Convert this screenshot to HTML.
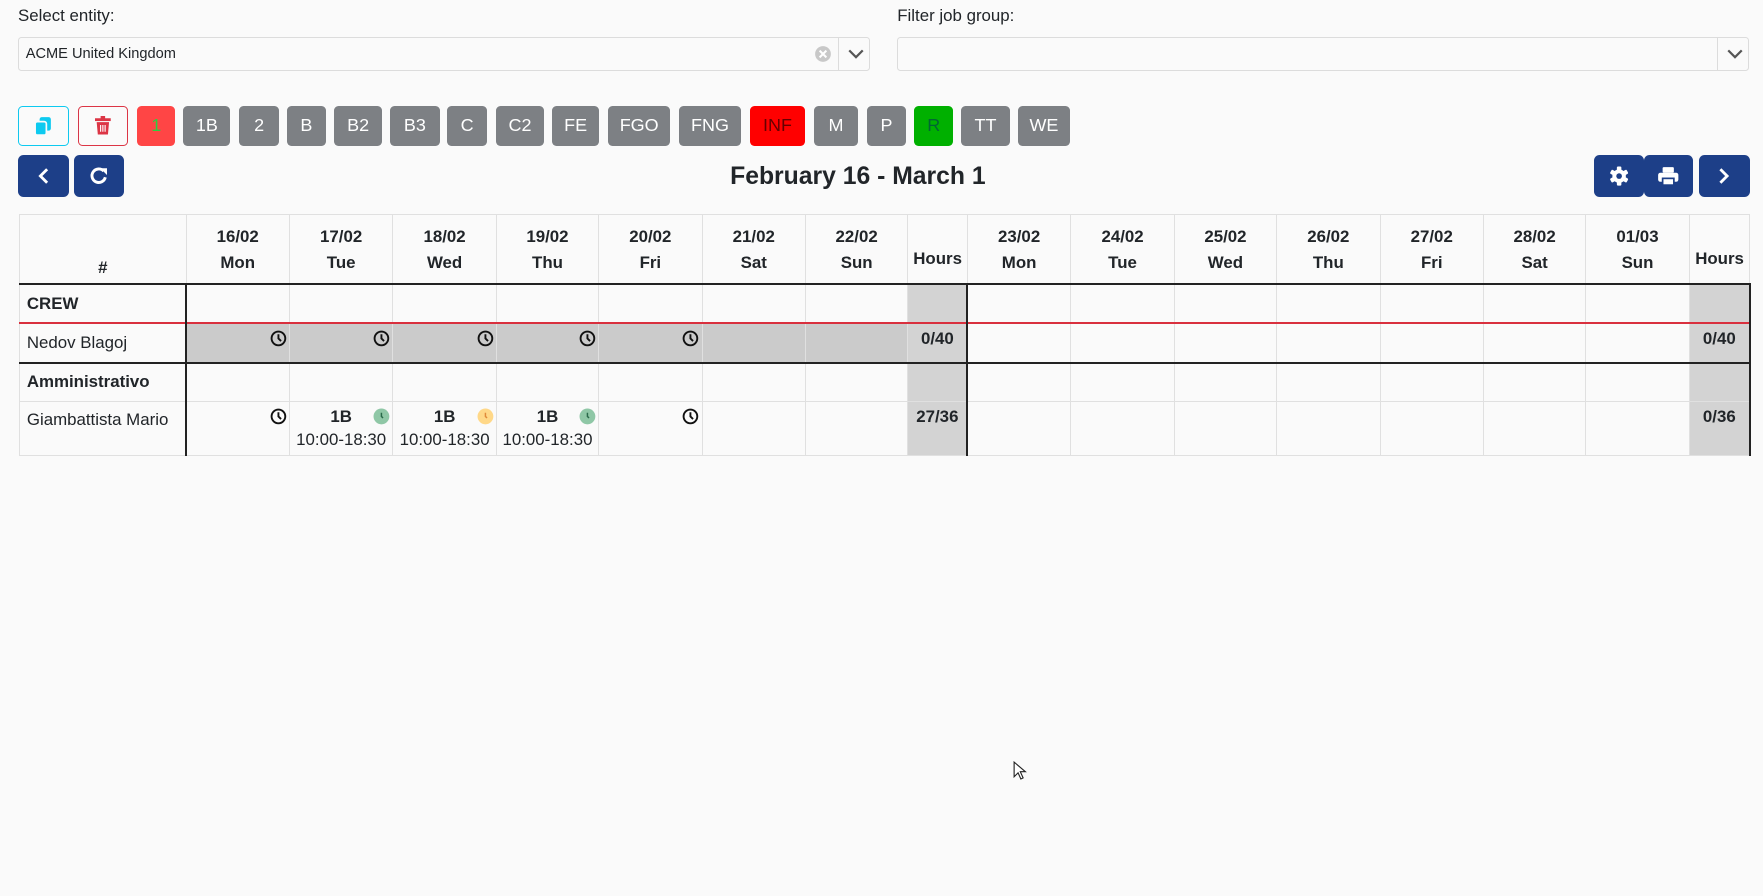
<!DOCTYPE html>
<html><head><meta charset="utf-8"><style>
html{zoom:1.12436}
body{margin:0;background:#fafafa;font-family:"Liberation Sans",sans-serif;color:#212529;width:1568px;height:797px;position:relative;overflow:hidden}
.abs{position:absolute}
.lbl{font-size:15px;top:5px}
.sel{height:28px;border:1px solid #dcdcdc;border-radius:3px;background:#fafafa;top:33px}
.btn{position:absolute;top:94px;height:36px;border-radius:4px;background:#7d8084;color:#fff;font-size:16px;display:flex;align-items:center;justify-content:center;box-sizing:border-box}
.nb{position:absolute;top:138px;height:37px;border-radius:5px;background:#1d3f88;display:flex;align-items:center;justify-content:center}
table{position:absolute;left:17px;top:190px;border-collapse:collapse;table-layout:fixed;width:1539px;font-size:15px}
td,th{border:1px solid #e0e0e0;padding:0;position:relative;box-sizing:border-box}
th{height:62px;font-weight:bold;font-size:15px;line-height:23px;text-align:center;vertical-align:middle;padding-top:2px}
th.h{vertical-align:bottom;padding-bottom:2px}
.bt td{border-top:2px solid #222}
td.n{border-right:2px solid #222;padding-left:6px;text-align:left}
tr.r1 td{height:35px}
tr.r3 td{height:48px;vertical-align:top}
.g{background:#cbcbcb}.hr{background:#d3d3d3;font-weight:bold;text-align:center;vertical-align:top;padding-top:4px}
.ck{position:absolute;right:2px;top:5px;width:15px;height:15px}
.sh{font-weight:bold;text-align:center;margin-top:4px;line-height:17px}
.tm{text-align:center;font-size:15px;margin-top:4px;line-height:18px}
</style></head><body>
<div class="abs lbl" style="left:16px">Select entity:</div>
<div class="abs lbl" style="left:798px">Filter job group:</div>
<div class="abs sel" style="left:16px;width:756px"><span style="position:absolute;left:6px;top:7px;font-size:13px">ACME United Kingdom</span>
<svg class="abs" style="left:707px;top:6px" width="16" height="16"><circle cx="8" cy="8" r="7" fill="#c8c8c8"/><path d="M5 5L11 11M11 5L5 11" stroke="#fff" stroke-width="1.8"/></svg>
<div class="abs" style="left:728px;top:0;width:1px;height:28px;background:#dcdcdc"></div>
<svg class="abs" style="left:736px;top:8px" width="16" height="12"><path d="M2 3L8 9L14 3" stroke="#555" stroke-width="2" fill="none"/></svg></div>
<div class="abs sel" style="left:798px;width:756px"><div class="abs" style="left:728px;top:0;width:1px;height:28px;background:#dcdcdc"></div>
<svg class="abs" style="left:736px;top:8px" width="16" height="12"><path d="M2 3L8 9L14 3" stroke="#555" stroke-width="2" fill="none"/></svg></div>

<div class="btn" style="left:16px;width:45px;background:#fafafa;border:1px solid #0dcaf0"><svg width="16" height="18"><rect x="5" y="1" width="10" height="12" rx="2" fill="#0dcaf0"/><rect x="1" y="5" width="10" height="12" rx="2" fill="#0dcaf0" stroke="#fafafa" stroke-width="1.5"/></svg></div>
<div class="btn" style="left:69px;width:45px;background:#fafafa;border:1px solid #dc3545"><svg width="14" height="17"><rect x="0" y="2" width="14" height="2.5" fill="#dc3545"/><rect x="5" y="0" width="4" height="3" fill="#dc3545"/><path d="M1.5 5.5h11l-1 11h-9z" fill="#dc3545"/><path d="M5 8v6M7 8v6M9 8v6" stroke="#fff" stroke-width="1"/></svg></div>
<div class="btn" style="left:122px;width:34px;background:#ff4545;color:#2ecc40">1</div>
<div class="btn" style="left:163px;width:42px">1B</div>
<div class="btn" style="left:213px;width:35px">2</div>
<div class="btn" style="left:255px;width:35px">B</div>
<div class="btn" style="left:297px;width:43px">B2</div>
<div class="btn" style="left:347px;width:44px">B3</div>
<div class="btn" style="left:398px;width:35px">C</div>
<div class="btn" style="left:441px;width:43px">C2</div>
<div class="btn" style="left:491px;width:42px">FE</div>
<div class="btn" style="left:541px;width:55px">FGO</div>
<div class="btn" style="left:604px;width:55px">FNG</div>
<div class="btn" style="left:667px;width:49px;background:#ff0000;color:#600">INF</div>
<div class="btn" style="left:724px;width:39px">M</div>
<div class="btn" style="left:771px;width:35px">P</div>
<div class="btn" style="left:813px;width:35px;background:#00b000;color:#063">R</div>
<div class="btn" style="left:855px;width:43px">TT</div>
<div class="btn" style="left:905px;width:47px">WE</div>

<div class="nb" style="left:16px;width:45px"><svg width="12" height="16"><path d="M9 2L3 8L9 14" stroke="#fff" stroke-width="2.5" fill="none"/></svg></div>
<div class="nb" style="left:66px;width:44px"><svg width="18" height="18"><path d="M14.5 10A6 6 0 1 1 13 4.5" stroke="#fff" stroke-width="2.6" fill="none"/><path d="M10 2H16V8Z" fill="#fff"/></svg></div>
<div class="abs" style="left:0;width:1526px;text-align:center;top:145px;font-size:22px;font-weight:bold">February 16 - March 1</div>
<div class="nb" style="left:1418px;width:44px"><svg width="18" height="18" viewBox="0 0 18 18"><g fill="#fff"><circle cx="9" cy="9" r="6"/><rect x="7" y="0.5" width="4" height="17" rx="1"/><rect x="7" y="0.5" width="4" height="17" rx="1" transform="rotate(60 9 9)"/><rect x="7" y="0.5" width="4" height="17" rx="1" transform="rotate(120 9 9)"/></g><circle cx="9" cy="9" r="2.5" fill="#1d3f88"/></svg></div>
<div class="nb" style="left:1462px;width:44px"><svg width="20" height="18"><rect x="5" y="1" width="10" height="5" rx="1" fill="#fff"/><rect x="1" y="6" width="18" height="8" rx="2" fill="#fff"/><rect x="5" y="11" width="10" height="6" fill="#fff" stroke="#1d3f88" stroke-width="1.5"/></svg></div>
<div class="nb" style="left:1511px;width:45px"><svg width="12" height="16"><path d="M3 2L9 8L3 14" stroke="#fff" stroke-width="2.5" fill="none"/></svg></div>

<svg width="0" height="0" style="position:absolute"><defs><symbol id="c" viewBox="0 0 16 16"><circle cx="8" cy="8" r="6.5" fill="none" stroke="#111" stroke-width="1.8"/><path d="M8 4V8L10.5 10.5" stroke="#111" stroke-width="1.8" fill="none"/></symbol><symbol id="cg" viewBox="0 0 16 16"><circle cx="8" cy="8" r="7.5" fill="#8fc7a6"/><path d="M8 4.5V8L9.5 9.5" stroke="#2a6a4a" stroke-width="1.4" fill="none"/></symbol><symbol id="cy" viewBox="0 0 16 16"><circle cx="8" cy="8" r="7.5" fill="#ffd888"/><path d="M8 4.5V8L9.5 9.5" stroke="#e08a3a" stroke-width="1.4" fill="none"/></symbol></defs></svg>

<table>
<colgroup><col style="width:148px"><col style="width:92px"><col style="width:92px"><col style="width:92px"><col style="width:91px"><col style="width:92px"><col style="width:92px"><col style="width:91px"><col style="width:53px"><col style="width:92px"><col style="width:92px"><col style="width:91px"><col style="width:92px"><col style="width:92px"><col style="width:91px"><col style="width:92px"><col style="width:54px"></colgroup>
<tr><th class="h">#</th><th>16/02<br>Mon</th><th>17/02<br>Tue</th><th>18/02<br>Wed</th><th>19/02<br>Thu</th><th>20/02<br>Fri</th><th>21/02<br>Sat</th><th>22/02<br>Sun</th><th class="h" style="padding-bottom:10px">Hours</th><th>23/02<br>Mon</th><th>24/02<br>Tue</th><th>25/02<br>Wed</th><th>26/02<br>Thu</th><th>27/02<br>Fri</th><th>28/02<br>Sat</th><th>01/03<br>Sun</th><th class="h" style="padding-bottom:10px">Hours</th></tr>
<tr class="r1 bt"><td class="n"><b>CREW</b></td><td></td><td></td><td></td><td></td><td></td><td></td><td></td><td class="hr" style="border-right:2px solid #222"></td><td></td><td></td><td></td><td></td><td></td><td></td><td></td><td class="hr" style="border-right:2px solid #222"></td></tr>
<tr class="r1" style="border-top:2px solid #d9303e"><td class="n">Nedov Blagoj</td>
<td class="g"><svg class="ck"><use href="#c"/></svg></td><td class="g"><svg class="ck"><use href="#c"/></svg></td><td class="g"><svg class="ck"><use href="#c"/></svg></td><td class="g"><svg class="ck"><use href="#c"/></svg></td><td class="g"><svg class="ck"><use href="#c"/></svg></td><td class="g"></td><td class="g"></td><td class="hr" style="border-right:2px solid #222">0/40</td><td></td><td></td><td></td><td></td><td></td><td></td><td></td><td class="hr" style="border-right:2px solid #222">0/40</td></tr>
<tr class="r1 bt"><td class="n"><b>Amministrativo</b></td><td></td><td></td><td></td><td></td><td></td><td></td><td></td><td class="hr" style="border-right:2px solid #222"></td><td></td><td></td><td></td><td></td><td></td><td></td><td></td><td class="hr" style="border-right:2px solid #222"></td></tr>
<tr class="r3"><td class="n" style="padding-top:7px">Giambattista Mario</td>
<td><svg class="ck"><use href="#c"/></svg></td>
<td><div class="sh">1B</div><div class="tm">10:00-18:30</div><svg class="ck"><use href="#cg"/></svg></td>
<td><div class="sh">1B</div><div class="tm">10:00-18:30</div><svg class="ck"><use href="#cy"/></svg></td>
<td><div class="sh">1B</div><div class="tm">10:00-18:30</div><svg class="ck"><use href="#cg"/></svg></td>
<td><svg class="ck"><use href="#c"/></svg></td><td></td><td></td><td class="hr" style="border-right:2px solid #222">27/36</td><td></td><td></td><td></td><td></td><td></td><td></td><td></td><td class="hr" style="border-right:2px solid #222">0/36</td></tr>
</table>
<svg class="abs" style="left:901px;top:677px" width="12" height="18"><path d="M1 1V14L4.5 10.5L7 16L9 15L6.5 9.5H11Z" fill="#fff" stroke="#222" stroke-width="1"/></svg>
</body></html>
